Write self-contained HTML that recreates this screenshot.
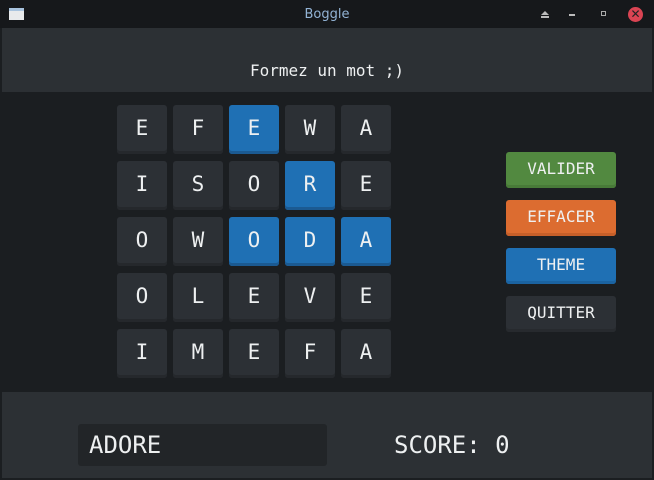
<!DOCTYPE html>
<html><head><meta charset="utf-8"><style>
*{margin:0;padding:0;box-sizing:border-box}
body{width:654px;height:480px;background:#1b1e21;position:relative;overflow:hidden;font-family:"DejaVu Sans Mono","Liberation Mono",monospace;color:#eef0f1}
#tb{position:absolute;left:0;top:0;width:654px;height:28px;background:#16181b}
#tb .t{position:absolute;left:0;width:654px;top:7px;text-align:center;font-family:"DejaVu Sans",sans-serif;font-size:13px;color:#93b4d6}
#hdr{position:absolute;left:2px;top:28px;width:650px;height:64px;background:#2c3034}
#hdr div{position:absolute;top:33px;width:100%;text-align:center;font-size:16px}
.tile{position:absolute;width:50px;height:49px;background:#2c3035;border-radius:3px;box-shadow:inset 0 -3px 0 #25282c;text-align:center;line-height:47px;font-size:21px}
.tile.b{background:#1f70b4;box-shadow:inset 0 -3px 0 #1b5a92}
.btn{position:absolute;left:506px;width:110px;height:36px;border-radius:3px;text-align:center;line-height:34px;font-size:16px}
#bot{position:absolute;left:2px;top:392px;width:650px;height:86px;background:#2c3034}
#inp{position:absolute;left:78px;top:424px;width:249px;height:42px;background:#222528;border-radius:3px;font-size:24px;line-height:42px;padding-left:11px}
#sc{position:absolute;left:394px;top:424px;line-height:42px;font-size:24px}
</style></head><body>
<div id="tb">
<div style="position:absolute;left:9px;top:8px;width:15px;height:12px;background:#e8eaec;border-top:3px solid #a9c4df"></div>
<div class="t">Boggle</div>
<div style="position:absolute;left:541px;top:11px;width:0;height:0;border-left:4px solid transparent;border-right:4px solid transparent;border-bottom:4px solid #bbb"></div>
<div style="position:absolute;left:541px;top:16px;width:8px;height:2px;background:#bbb"></div>
<div style="position:absolute;left:569px;top:14px;width:6px;height:2px;background:#bbb"></div>
<div style="position:absolute;left:601px;top:11px;width:5px;height:5px;border:1px solid #aaa"></div>
<div style="position:absolute;left:628px;top:7px;width:15px;height:15px;border-radius:50%;background:#da4453;color:#222;font-size:12px;line-height:15px;text-align:center;font-family:'DejaVu Sans',sans-serif">✕</div>
</div>
<div id="hdr"><div>Formez un mot ;)</div></div>

<div class="tile" style="left:117px;top:105px">E</div>
<div class="tile" style="left:173px;top:105px">F</div>
<div class="tile b" style="left:229px;top:105px">E</div>
<div class="tile" style="left:285px;top:105px">W</div>
<div class="tile" style="left:341px;top:105px">A</div>

<div class="tile" style="left:117px;top:161px">I</div>
<div class="tile" style="left:173px;top:161px">S</div>
<div class="tile" style="left:229px;top:161px">O</div>
<div class="tile b" style="left:285px;top:161px">R</div>
<div class="tile" style="left:341px;top:161px">E</div>

<div class="tile" style="left:117px;top:217px">O</div>
<div class="tile" style="left:173px;top:217px">W</div>
<div class="tile b" style="left:229px;top:217px">O</div>
<div class="tile b" style="left:285px;top:217px">D</div>
<div class="tile b" style="left:341px;top:217px">A</div>

<div class="tile" style="left:117px;top:273px">O</div>
<div class="tile" style="left:173px;top:273px">L</div>
<div class="tile" style="left:229px;top:273px">E</div>
<div class="tile" style="left:285px;top:273px">V</div>
<div class="tile" style="left:341px;top:273px">E</div>

<div class="tile" style="left:117px;top:329px">I</div>
<div class="tile" style="left:173px;top:329px">M</div>
<div class="tile" style="left:229px;top:329px">E</div>
<div class="tile" style="left:285px;top:329px">F</div>
<div class="tile" style="left:341px;top:329px">A</div>

<div class="btn" style="top:152px;background:#528940;box-shadow:inset 0 -3px 0 #487a38">VALIDER</div>
<div class="btn" style="top:200px;background:#dc6c30;box-shadow:inset 0 -3px 0 #c65f29">EFFACER</div>
<div class="btn" style="top:248px;background:#1f70b4;box-shadow:inset 0 -3px 0 #1b63a1">THEME</div>
<div class="btn" style="top:296px;background:#2c3035;box-shadow:inset 0 -3px 0 #272a2e">QUITTER</div>

<div id="bot"></div>
<div id="inp">ADORE</div>
<div id="sc">SCORE: 0</div>
</body></html>
